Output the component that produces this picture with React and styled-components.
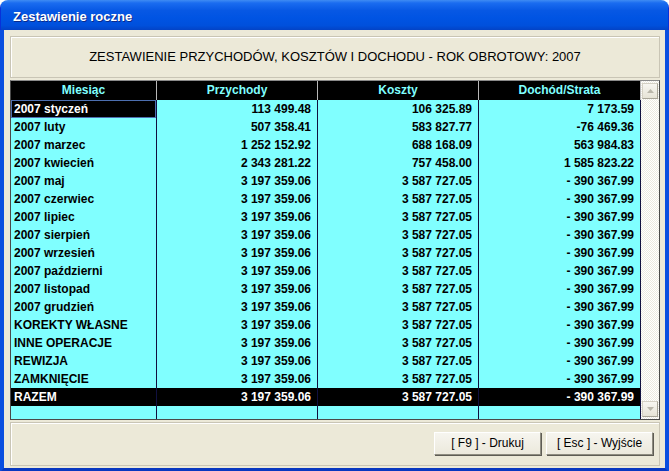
import React from "react";
import styled, { createGlobalStyle } from "styled-components";

const GlobalStyle = createGlobalStyle`
  html, body { margin: 0; padding: 0; background: #ffffff; }
  body { width: 669px; height: 471px; overflow: hidden; }
  * { box-sizing: border-box; }
`;

const Window = styled.div`
  width: 669px;
  height: 471px;
  display: flex;
  flex-direction: column;
  border-radius: 8px 8px 0 0;
  overflow: hidden;
  font-family: "Liberation Sans", Arial, sans-serif;
`;

const TitleBar = styled.div`
  height: 30px;
  flex: none;
  display: flex;
  align-items: center;
  padding: 3px 0 0 12px;
  background: linear-gradient(
    to bottom,
    #3f8cf3 0%,
    #1a6cf0 10%,
    #0758e4 35%,
    #0054e3 60%,
    #0050dc 85%,
    #0343c6 100%
  );
  color: #ffffff;
  font-weight: bold;
  font-size: 13px;
  text-shadow: 1px 1px 0 #0a2a8a;
  border-left: 1px solid #0831d9;
  border-right: 1px solid #0831d9;
`;

const Frame = styled.div`
  flex: 1;
  display: flex;
  flex-direction: column;
  gap: 2px;
  background: #ece9d8;
  padding: 6px 5px 2px 6px;
  border-left: 4px solid #0a4fe0;
  border-right: 4px solid #0a4fe0;
  border-bottom: 4px solid #0838c0;
`;

const Panel = styled.div`
  height: ${(p) => p.$h}px;
  flex: none;
  display: flex;
  align-items: center;
  justify-content: ${(p) => p.$justify || "center"};
  gap: 5px;
  padding: 0 6px 2px 0;
  border: 1px solid #c9c5b5;
  box-shadow: inset 1px 1px 0 #ffffff;
  background: #ece9d8;
`;

const Heading = styled.div`
  font-size: 13px;
  color: #000000;
  letter-spacing: 0;
  padding-left: 6px;
`;

const Table = styled.div`
  height: 340px;
  flex: none;
  display: flex;
  border: 1px solid #4a4a4a;
  border-top-color: #8a8a8a;
`;

const Grid = styled.div`
  flex: 1;
  display: flex;
  flex-direction: column;
  background: #80ffff;
`;

const Row = styled.div`
  display: grid;
  grid-template-columns: 146px 161px 161px 1fr;
  height: ${(p) => p.$h || 18}px;
  flex: ${(p) => (p.$fill ? 1 : "none")};
  background: ${(p) => (p.$dark ? "#000000" : "transparent")};
`;

const HeadCell = styled.div`
  display: flex;
  align-items: center;
  justify-content: center;
  color: #80ffff;
  font-weight: bold;
  font-size: 12px;
  border-right: 1px solid #b8b8b8;
  padding-bottom: 1px;
`;

const Cell = styled.div`
  display: flex;
  align-items: center;
  justify-content: ${(p) => (p.$num ? "flex-end" : "flex-start")};
  padding: ${(p) => (p.$num ? "0 6px 0 0" : "0 0 0 3px")};
  font-weight: bold;
  font-size: 12px;
  color: ${(p) => (p.$light ? "#ffffff" : "#000000")};
  background: ${(p) => (p.$selected ? "#000000" : "transparent")};
  box-shadow: ${(p) => (p.$selected ? "inset 0 0 0 1px #4d6fb0" : "none")};
  border-right: 1px solid #101040;
  white-space: nowrap;
`;

const Scrollbar = styled.div`
  width: 18px;
  flex: none;
  display: flex;
  flex-direction: column;
  align-items: center;
  padding: 2px 0;
  background-color: #f6f5f0;
  background-image: repeating-conic-gradient(#ffffff 0 25%, #ebe9e0 0 50%);
  background-size: 2px 2px;
`;

const ScrollButton = styled.div`
  width: 16px;
  height: 16px;
  display: flex;
  align-items: center;
  justify-content: center;
  background: linear-gradient(#f7f6f1, #e6e3d6);
  border: 1px solid #d4d0c4;
  border-right-color: #a8a598;
  border-bottom-color: #a8a598;
`;

const Track = styled.div`
  flex: 1;
`;

const Button = styled.div`
  width: 107px;
  height: 23px;
  display: flex;
  align-items: center;
  justify-content: center;
  font-size: 12px;
  color: #000000;
  background: linear-gradient(#f6f5ef, #ece9dc);
  border: 1px solid #ffffff;
  border-right-color: #8e8c80;
  border-bottom-color: #8e8c80;
  box-shadow: 1px 1px 0 #5e5c54;
`;

const Arrow = ({ up }) => (
  <svg width="7" height="4" viewBox="0 0 7 4">
    <path d={up ? "M0 4 L3.5 0 L7 4 Z" : "M0 0 L3.5 4 L7 0 Z"} fill="#b9b6aa" />
  </svg>
);

const same = ["3 197 359.06", "3 587 727.05", "- 390 367.99"];
const rows = [
  ["2007 styczeń", "113 499.48", "106 325.89", "7 173.59"],
  ["2007 luty", "507 358.41", "583 827.77", "-76 469.36"],
  ["2007 marzec", "1 252 152.92", "688 168.09", "563 984.83"],
  ["2007 kwiecień", "2 343 281.22", "757 458.00", "1 585 823.22"],
  ["2007 maj", ...same],
  ["2007 czerwiec", ...same],
  ["2007 lipiec", ...same],
  ["2007 sierpień", ...same],
  ["2007 wrzesień", ...same],
  ["2007 październi", ...same],
  ["2007 listopad", ...same],
  ["2007 grudzień", ...same],
  ["KOREKTY WŁASNE", ...same],
  ["INNE OPERACJE", ...same],
  ["REWIZJA", ...same],
  ["ZAMKNIĘCIE", ...same],
];

export default function App() {
  return (
    <>
      <GlobalStyle />
      <Window>
        <TitleBar>Zestawienie roczne</TitleBar>
        <Frame>
          <Panel $h={42}>
            <Heading>ZESTAWIENIE PRZYCHODÓW, KOSZTÓW I DOCHODU - ROK OBROTOWY: 2007</Heading>
          </Panel>
          <Table>
            <Grid>
              <Row $dark $h={19}>
                <HeadCell>Miesiąc</HeadCell>
                <HeadCell>Przychody</HeadCell>
                <HeadCell>Koszty</HeadCell>
                <HeadCell>Dochód/Strata</HeadCell>
              </Row>
              {rows.map((r, i) => (
                <Row key={r[0]}>
                  <Cell $selected={i === 0} $light={i === 0}>{r[0]}</Cell>
                  <Cell $num>{r[1]}</Cell>
                  <Cell $num>{r[2]}</Cell>
                  <Cell $num>{r[3]}</Cell>
                </Row>
              ))}
              <Row $dark>
                <Cell $light>RAZEM</Cell>
                <Cell $num $light>3 197 359.06</Cell>
                <Cell $num $light>3 587 727.05</Cell>
                <Cell $num $light>- 390 367.99</Cell>
              </Row>
              <Row $fill>
                <Cell />
                <Cell />
                <Cell />
                <Cell />
              </Row>
            </Grid>
            <Scrollbar>
              <ScrollButton><Arrow up /></ScrollButton>
              <Track />
              <ScrollButton><Arrow /></ScrollButton>
            </Scrollbar>
          </Table>
          <Panel $h={44} $justify="flex-end">
            <Button>[ F9 ] - Drukuj</Button>
            <Button>[ Esc ] - Wyjście</Button>
          </Panel>
        </Frame>
      </Window>
    </>
  );
}
